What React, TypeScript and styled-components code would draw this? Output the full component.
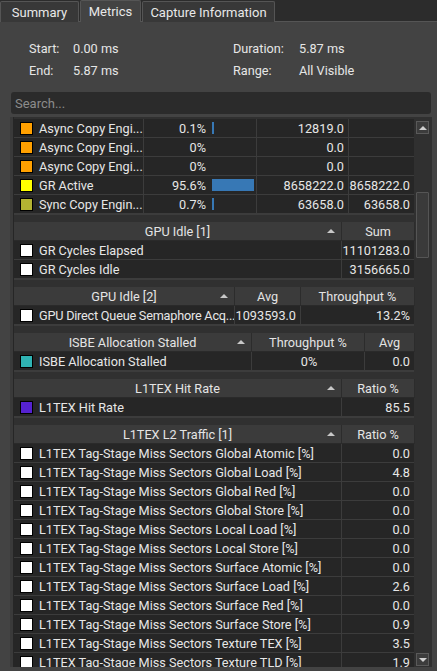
import React from "react";
import styled, { createGlobalStyle } from "styled-components";

const Global = createGlobalStyle`
  html, body { margin: 0; padding: 0; background: #434343; }
  body { font-family: Roboto, "Liberation Sans", sans-serif; font-size: 12.7px; color: #e6e6e6; }
  * { box-sizing: border-box; }
`;

const Page = styled.div`
  width: 437px;
  height: 671px;
  overflow: hidden;
  display: flex;
  flex-direction: column;
  background: #434343;
`;

const TabBar = styled.div`
  display: flex;
  height: 22px;
  background: #2c2c2c;
  border-bottom: 1px solid #555;
  gap: 1px;
`;

const Tab = styled.div<{ $active?: boolean; $w: number }>`
  width: ${(p) => p.$w}px;
  height: ${(p) => (p.$active ? 22 : 21)}px;
  margin-top: ${(p) => (p.$active ? 0 : 1)}px;
  background: ${(p) => (p.$active ? "#434343" : "#383838")};
  border: 1px solid #555;
  border-bottom: none;
  border-radius: 2px 2px 0 0;
  display: flex;
  align-items: center;
  justify-content: center;
  font-size: 13px;
  color: #e8e8e8;
  position: relative;
  z-index: ${(p) => (p.$active ? 1 : 0)};
`;

const Info = styled.div`
  display: grid;
  grid-template-columns: 44px 160px 66px 1fr;
  grid-auto-rows: 22px;
  align-items: center;
  padding: 15px 0 0 29px;
  color: #e6e6e6;
`;

const Search = styled.div`
  margin: 11px 6px 0 11px;
  height: 22px;
  background: #2b2b2b;
  border-radius: 3px;
  display: flex;
  align-items: center;
  padding-left: 4px;
  color: #8c8c8c;
  font-size: 13px;
`;

const Frame = styled.div`
  margin: 3px 5px 4px 10px;
  flex: 1;
  min-height: 0;
  background: #303030;
  border-left: 3px solid #3a3a3a;
  display: flex;
  overflow: hidden;
`;

const Content = styled.div`
  width: 401px;
  display: flex;
  flex-direction: column;
  gap: 7px;
  padding-top: 2px;
  border-left: 1px solid #262626;
`;

const Table = styled.div<{ $cols: string }>`
  display: grid;
  grid-template-columns: ${(p) => p.$cols};
  background: #262626;
  border-bottom: 1px solid #3c3c3c;
`;

const Head = styled.div`
  height: 19px;
  background: #3b3b3b;
  border-right: 1px solid #2c2c2c;
  border-bottom: 1px solid #2a2a2a;
  display: flex;
  align-items: center;
  justify-content: center;
  color: #e4e4e4;
  position: relative;
  &:last-child { border-right: none; }
`;

const SortArrow = styled.span`
  position: absolute;
  right: 6px;
  top: 7px;
  width: 0;
  height: 0;
  border-left: 4px solid transparent;
  border-right: 4px solid transparent;
  border-bottom: 4px solid #c8c8c8;
`;

const Cell = styled.div<{ $align?: string }>`
  height: 19px;
  border-right: 1px solid #3c3c3c;
  border-bottom: 1px solid #3c3c3c;
  display: flex;
  align-items: center;
  justify-content: ${(p) => p.$align || "flex-end"};
  padding: 0 4px 0 6px;
  white-space: nowrap;
  overflow: hidden;
  color: #e6e6e6;
`;

const NameCell = styled(Cell)`
  padding-right: 0;
`;

const Swatch = styled.span<{ $c: string }>`
  width: 13px;
  height: 13px;
  flex: none;
  background: ${(p) => p.$c};
  border: 1px solid #000;
  margin-right: 6px;
`;

const Name = styled.span<{ $tight?: boolean }>`
  flex: none;
  white-space: nowrap;
  letter-spacing: ${(p) => (p.$tight ? "-0.22px" : "normal")};
`;

const Pct = styled.span`
  width: 62px;
  text-align: right;
  flex: none;
`;

const BarTrack = styled.span`
  width: 44px;
  height: 12px;
  margin-left: 6px;
  flex: none;
  display: flex;
`;

const Bar = styled.span`
  height: 100%;
  background: #3778b5;
`;

const ScrollBar = styled.div`
  width: 17px;
  display: flex;
  flex-direction: column;
  align-items: center;
  padding: 4px 0 1px;
  background: #303030;
`;

const ScrollBtn = styled.div<{ $down?: boolean }>`
  width: 13px;
  height: 13px;
  background: #3c3c3c;
  border: 1px solid #5a5a5a;
  display: flex;
  align-items: center;
  justify-content: center;
  &::after {
    content: "";
    border-left: 4px solid transparent;
    border-right: 4px solid transparent;
    ${(p) => (p.$down ? "border-top: 4px solid #d0d0d0;" : "border-bottom: 4px solid #d0d0d0;")}
  }
`;

const Track = styled.div`
  flex: 1;
  width: 13px;
  display: flex;
  flex-direction: column;
  padding: 58px 0 0;
`;

const Thumb = styled.div`
  height: 66px;
  width: 13px;
  background: #3a3a3a;
  border: 1px solid #555;
  border-radius: 1px;
`;

type Row = { c: string; n: string; v: string[]; tight?: boolean };

const first = [
  { c: "#ffa000", n: "Async Copy Engi...", p: "0.1%", b: 2, v: ["12819.0", ""] },
  { c: "#ffa000", n: "Async Copy Engi...", p: "0%", b: 0, v: ["0.0", ""] },
  { c: "#ffa000", n: "Async Copy Engi...", p: "0%", b: 0, v: ["0.0", ""] },
  { c: "#ffff00", n: "GR Active", p: "95.6%", b: 42, v: ["8658222.0", "8658222.0"] },
  { c: "#b3b332", n: "Sync Copy Engin...", p: "0.7%", b: 2, v: ["63658.0", "63658.0"] },
];

const l2: [string, string][] = [
  ["Global Atomic", "0.0"],
  ["Global Load", "4.8"],
  ["Global Red", "0.0"],
  ["Global Store", "0.0"],
  ["Local Load", "0.0"],
  ["Local Store", "0.0"],
  ["Surface Atomic", "0.0"],
  ["Surface Load", "2.6"],
  ["Surface Red", "0.0"],
  ["Surface Store", "0.9"],
  ["Texture TEX", "3.5"],
  ["Texture TLD", "1.9"],
];

function Group({
  cols,
  heads,
  rows,
  center,
}: {
  cols: string;
  heads: string[];
  rows: Row[];
  center?: number;
}) {
  return (
    <Table $cols={cols}>
      {heads.map((h, i) => (
        <Head key={i}>
          {h}
          {i === 0 && <SortArrow />}
        </Head>
      ))}
      {rows.map((r, i) => (
        <React.Fragment key={i}>
          <NameCell $align="flex-start">
            <Swatch $c={r.c} />
            <Name $tight={r.tight}>{r.n}</Name>
          </NameCell>
          {r.v.map((v, j) => (
            <Cell key={j} $align={center === j ? "center" : "flex-end"}>
              {v}
            </Cell>
          ))}
        </React.Fragment>
      ))}
    </Table>
  );
}

export default function App() {
  return (
    <Page>
      <Global />
      <TabBar>
        <Tab $w={79}>Summary</Tab>
        <Tab $w={61} $active>Metrics</Tab>
        <Tab $w={133}>Capture Information</Tab>
      </TabBar>
      <Info>
        <span>Start:</span>
        <span>0.00 ms</span>
        <span>Duration:</span>
        <span>5.87 ms</span>
        <span>End:</span>
        <span>5.87 ms</span>
        <span>Range:</span>
        <span>All Visible</span>
      </Info>
      <Search>Search...</Search>
      <Frame>
        <Content>
          <Table $cols="130px 113px 92px 66px">
            {first.map((r, i) => (
              <React.Fragment key={i}>
                <NameCell $align="flex-start">
                  <Swatch $c={r.c} />
                  <Name>{r.n}</Name>
                </NameCell>
                <Cell $align="flex-start" style={{ paddingLeft: 0 }}>
                  <Pct>{r.p}</Pct>
                  <BarTrack>
                    <Bar style={{ width: `${r.b}px` }} />
                  </BarTrack>
                </Cell>
                <Cell>{r.v[0]}</Cell>
                <Cell>{r.v[1]}</Cell>
              </React.Fragment>
            ))}
          </Table>
          <Group
            cols="328px 73px"
            heads={["GPU Idle [1]", "Sum"]}
            rows={[
              { c: "#ffffff", n: "GR Cycles Elapsed", v: ["11101283.0"] },
              { c: "#ffffff", n: "GR Cycles Idle", v: ["3156665.0"] },
            ]}
          />
          <Group
            cols="221px 66px 114px"
            heads={["GPU Idle [2]", "Avg", "Throughput %"]}
            rows={[
              { c: "#ffffff", n: "GPU Direct Queue Semaphore Acq...", v: ["1093593.0", "13.2%"], tight: true },
            ]}
          />
          <Group
            cols="238px 113px 50px"
            heads={["ISBE Allocation Stalled", "Throughput %", "Avg"]}
            rows={[{ c: "#2fb3b3", n: "ISBE Allocation Stalled", v: ["0%", "0.0"] }]}
            center={0}
          />
          <Group
            cols="328px 73px"
            heads={["L1TEX Hit Rate", "Ratio %"]}
            rows={[{ c: "#5522d0", n: "L1TEX Hit Rate", v: ["85.5"] }]}
          />
          <Group
            cols="328px 73px"
            heads={["L1TEX L2 Traffic [1]", "Ratio %"]}
            rows={l2.map(([n, v]) => ({
              c: "#ffffff",
              n: `L1TEX Tag-Stage Miss Sectors ${n} [%]`,
              v: [v],
            }))}
          />
        </Content>
        <ScrollBar>
          <ScrollBtn />
          <Track>
            <Thumb />
          </Track>
          <ScrollBtn $down />
        </ScrollBar>
      </Frame>
    </Page>
  );
}
